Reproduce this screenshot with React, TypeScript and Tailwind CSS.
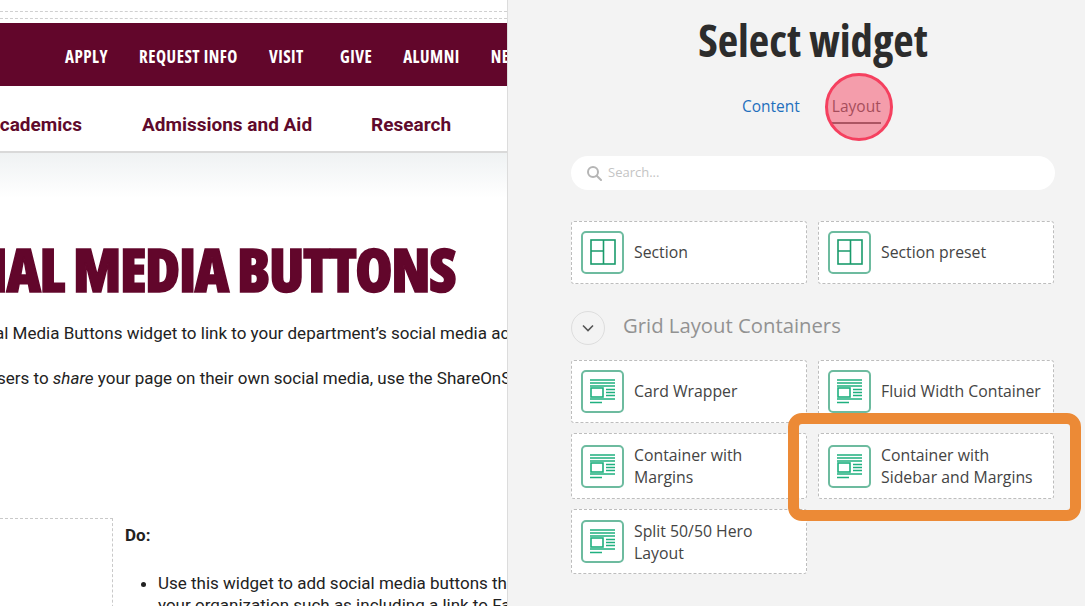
type WidgetCardProps = {
  lines: string[];
  icon: "section" | "grid";
  height: string;
};

function SectionIcon() {
  return (
    <svg width="43" height="43" viewBox="0 0 43 43" fill="none" className="shrink-0">
      <rect x="1" y="1" width="41" height="41" rx="4" stroke="#6dbb9f" strokeWidth="2" />
      <rect x="10" y="9" width="24" height="24" stroke="#1a9b6c" strokeWidth="1.6" />
      <path d="M22.5 9v24M10 20h12.5" stroke="#1a9b6c" strokeWidth="1.6" />
    </svg>
  );
}

function GridIcon() {
  return (
    <svg width="43" height="43" viewBox="0 0 43 43" fill="none" className="shrink-0">
      <rect x="1" y="1" width="41" height="41" rx="4" stroke="#6dbb9f" strokeWidth="2" />
      <path d="M9 10h25M9 13h25M9 16h25M25 19.5h9M25 22.5h9M25 25.5h9M9 29h25M9 32.5h12" stroke="#1fb07f" strokeWidth="1.5" />
      <rect x="10" y="18" width="12" height="9" stroke="#1fb07f" strokeWidth="1.6" />
    </svg>
  );
}

function WidgetCard({ lines, icon, height }: WidgetCardProps) {
  return (
    <div className={`flex items-center gap-[10px] rounded-[3px] border border-dashed border-[#bdbdbd] bg-white pl-[9px] ${height}`}>
      {icon === "section" ? <SectionIcon /> : <GridIcon />}
      <div className={`text-[15.8px] leading-[22px] text-[#444444] ${lines.length === 1 ? "pb-[2px]" : ""}`}>
        {lines.map((line) => (
          <div key={line} className="whitespace-nowrap">
            {line}
          </div>
        ))}
      </div>
    </div>
  );
}

function WebsitePreview() {
  return (
    <div className="relative h-full w-[508px] shrink-0 overflow-hidden border-r border-[#dcdcdc] bg-white font-['Roboto',sans-serif]">
      <div className="h-[23px] pt-[11px]">
        <div className="h-[8px] border-y border-dashed border-[#d0d0d0]" />
      </div>

      <div className="flex h-[63px] items-center gap-[31px] whitespace-nowrap bg-[#62062b] pl-[65px] pt-[5px] font-['Open_Sans',sans-serif] text-[17px] font-bold leading-[24px] tracking-[0.5px] text-white [font-stretch:75%]">
        <span>APPLY</span>
        <span>REQUEST INFO</span>
        <span>VISIT</span>
        <span className="ml-[5px]">GIVE</span>
        <span>ALUMNI</span>
        <span>NEWS</span>
      </div>

      <div className="flex h-[67px] items-center whitespace-nowrap border-b-2 border-[#d9d9d9] pt-[13px] text-[19px] font-bold text-[#5f0a2c]">
        <span className="-ml-[13px] w-[95px] shrink-0">Academics</span>
        <span className="ml-[60px] shrink-0">Admissions and Aid</span>
        <span className="ml-[59px] shrink-0">Research</span>
      </div>

      <div className="h-[45px] bg-gradient-to-b from-[#eff2f3] to-white" />

      <div className="mt-[36px] flex h-[70px] justify-end whitespace-nowrap pr-[52px] font-['Open_Sans',sans-serif] text-[60px] font-extrabold leading-[70px] tracking-[-1.4px] text-[#62062b] [font-stretch:75%]">
        <h1 className="shrink-0 [-webkit-text-stroke:1.5px_#62062b]">SOCIAL MEDIA BUTTONS</h1>
      </div>

      <p className="-ml-[5px] mt-[17px] whitespace-nowrap text-[17px] leading-[24px] text-[#222222]">
        al Media Buttons widget to link to your department’s social media accounts
      </p>
      <p className="-ml-[3px] mt-[21px] whitespace-nowrap text-[17px] leading-[24px] text-[#222222]">
        sers to <em>share</em> your page on their own social media, use the ShareOnSocial widget
      </p>

      <div className="mt-[128px] flex">
        <div className="h-[100px] w-[113px] shrink-0 border-r border-t border-dashed border-[#c9c9c9]" />
        <div className="pl-[12px] pt-[6px] text-[17px] text-[#222222]">
          <p className="font-bold leading-[22px]">Do:</p>
          <ul className="mt-[26px] list-disc whitespace-nowrap pl-[33px] leading-[22px]">
            <li>Use this widget to add social media buttons that link to</li>
            <li className="list-none">your organization such as including a link to Facebook</li>
          </ul>
        </div>
      </div>
    </div>
  );
}

function WidgetPanel() {
  return (
    <div className="relative h-full flex-1 bg-[#f3f3f3] font-['Open_Sans',sans-serif]">
      <div className="ml-[63px] w-[484px]">
        <h2 className="pt-[12px] whitespace-nowrap text-center text-[44.6px] font-bold leading-[56px] text-[#2c2c2c] [font-stretch:75%]">
          Select widget
        </h2>

        <div className="mt-[22px] flex h-[33px] items-start gap-[32px] pl-[171px] text-[15.5px] leading-[32px]">
          <span className="text-[#1e6fbd]">Content</span>
          <span className="border-b-2 border-[#555555] text-[#444444]">Layout</span>
        </div>

        <div className="mt-[33px] flex h-[34px] items-center gap-[6px] rounded-full bg-white pl-[15px] text-[13px] text-[#c4c4c4]">
          <svg width="16" height="16" viewBox="0 0 16 16" fill="none" stroke="#b5b5b5" strokeWidth="2">
            <circle cx="7" cy="7" r="5" />
            <path d="M10.7 10.7L15 15" strokeLinecap="round" />
          </svg>
          <span>Search...</span>
        </div>

        <div className="mt-[31px] grid w-[483px] grid-cols-2 gap-x-[11px]">
          <WidgetCard icon="section" lines={["Section"]} height="h-[63px]" />
          <WidgetCard icon="section" lines={["Section preset"]} height="h-[63px]" />
        </div>

        <div className="mt-[26px] flex items-center gap-[18px]">
          <span className="flex h-[34px] w-[34px] items-center justify-center rounded-full border border-[#dddddd]">
            <svg width="12" height="8" viewBox="0 0 12 8" fill="none" stroke="#555555" strokeWidth="1.6">
              <path d="M1 1.5l5 5 5-5" />
            </svg>
          </span>
          <span className="pb-[5px] text-[20.3px] leading-[30px] text-[#929292]">Grid Layout Containers</span>
        </div>

        <div className="mt-[15px] grid w-[483px] grid-cols-2 gap-x-[11px] gap-y-[10px]">
          <WidgetCard icon="grid" lines={["Card Wrapper"]} height="h-[63px]" />
          <WidgetCard icon="grid" lines={["Fluid Width Container"]} height="h-[63px]" />
          <WidgetCard icon="grid" lines={["Container with", "Margins"]} height="h-[66px]" />
          <WidgetCard icon="grid" lines={["Container with", "Sidebar and Margins"]} height="h-[66px]" />
          <WidgetCard icon="grid" lines={["Split 50/50 Hero", "Layout"]} height="h-[65px]" />
        </div>
      </div>

      {/* annotations drawn over the screenshot */}
      <div className="absolute left-[317px] top-[73px] h-[68px] w-[68px] rounded-full border-[3px] border-[#f5405f] bg-[#f4566f]/55" />
      <div className="absolute left-[280px] top-[413px] h-[108px] w-[293px] rounded-[14px] border-[11.5px] border-[#ec8a36]" />
    </div>
  );
}

export default function App() {
  return (
    <div className="flex h-screen w-full overflow-hidden">
      <WebsitePreview />
      <WidgetPanel />
    </div>
  );
}
